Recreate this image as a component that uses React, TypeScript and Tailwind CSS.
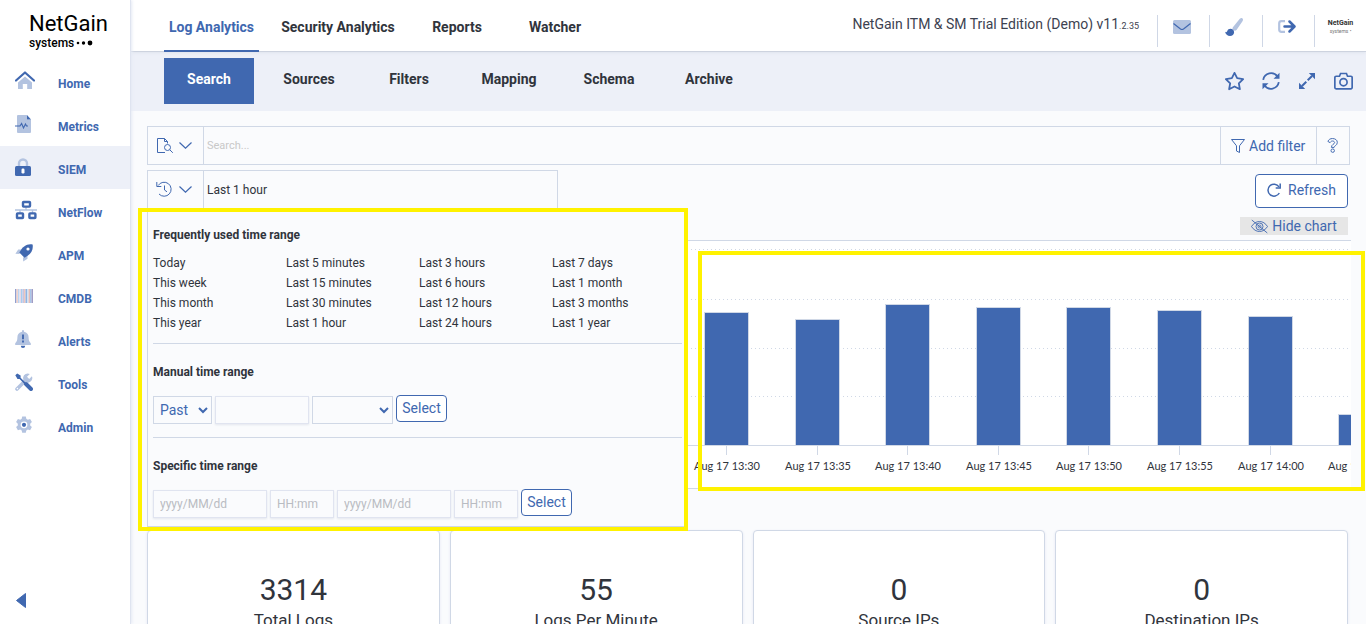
import { useState } from "react";
import type { ReactNode } from "react";

const BLUE = "#4068b0";
const PALE = "#b3c3e0";

const Icon = ({ size = 18, box = "0 0 18 18", children }: { size?: number; box?: string; children: ReactNode }) => (
  <svg width={size} height={size} viewBox={box} fill="none" aria-hidden="true" className="shrink-0">
    {children}
  </svg>
);

const HomeIcon = () => (
  <Icon size={20} box="0 0 20 20">
    <path d="M10 5.500 17 11.500V18h-4.800v-5H7.800v5H3v-6.500z" fill={PALE} />
    <path d="M1 9.500 10 1.500l9 8" stroke={BLUE} strokeWidth="2.200" strokeLinecap="round" strokeLinejoin="round" />
  </Icon>
);

const MetricsIcon = () => (
  <Icon>
    <path d="M3 0h9v4.500h4V17a1 1 0 0 1-1 1H3a1 1 0 0 1-1-1V1a1 1 0 0 1 1-1z" fill={PALE} />
    <path d="M12 0v4.500h4z" fill={BLUE} />
    <path d="M0 11h5l1.600-2.500L8.500 13l2-4 1 2H13" stroke={BLUE} strokeWidth="1.100" />
  </Icon>
);

const LockIcon = () => (
  <Icon>
    <path d="M4 9V5.500a4 4 0 0 1 8 0V9" stroke={PALE} strokeWidth="2.400" />
    <rect x="0" y="8" width="16" height="10" rx="1.500" fill={BLUE} />
    <rect x="6.500" y="10.500" width="3" height="5" rx="1.200" fill="#fff" />
  </Icon>
);

const NetflowIcon = () => (
  <Icon size={22} box="0 0 22 18">
    <path d="M0 9h22M11 6v3M5 9v3M17.500 9v3" stroke={PALE} strokeWidth="1.400" />
    <rect x="8" y="1" width="7" height="4.600" rx="0.600" stroke={BLUE} strokeWidth="2.400" />
    <rect x="2" y="12.400" width="6" height="4.600" rx="0.600" stroke={BLUE} strokeWidth="2.400" />
    <rect x="14.400" y="12.400" width="6" height="4.600" rx="0.600" stroke={BLUE} strokeWidth="2.400" />
  </Icon>
);

const RocketIcon = () => (
  <Icon>
    <path d="M6 5.500H3.200L.4 9.800 4.500 10zM12.500 12v2.800L8.200 17.600 8 13.500z" fill={PALE} />
    <path d="M17.600.5c.9 5-1.200 9.500-8.100 13.200L4.300 8.500C7.500 2.500 12-.6 17.600.5z" fill={BLUE} />
    <circle cx="13" cy="5" r="1.600" fill="#fff" />
  </Icon>
);

const stripes = [
  "#8f9fd0", "#f3d3cb", "#b9d6f3", "#e6d9e6", "#a5cdf0", "#c9c4de",
  "#efc7bd", "#8fb4e2", "#cfe3f6", "#e3bdb8", "#a9c6ea", "#a09cc4",
];

const BarcodeIcon = () => (
  <Icon>
    {stripes.map((color, i) => (
      <rect key={color} x={i * 1.5} y="2" width="1.500" height="14" fill={color} />
    ))}
  </Icon>
);

const BellIcon = () => (
  <Icon>
    <path d="M8 0a1 1 0 0 1 1 1v.8c3 .5 4.600 2.700 4.600 5.500 0 3 .6 4.400 2.200 6V15H.2v-1.700c1.600-1.600 2.200-3 2.200-6C2.400 4.500 4 2.300 7 1.800V1a1 1 0 0 1 1-1z" fill={PALE} />
    <path d="M5.800 15.800h4.400a2.200 2.200 0 0 1-4.400 0z" fill={BLUE} />
    <path d="M8 4.500v4.800M8 10.600v1.800" stroke={BLUE} strokeWidth="1.900" />
  </Icon>
);

const ToolsIcon = () => (
  <Icon>
    <path d="M2 16 11.500 6.500" stroke={PALE} strokeWidth="3.600" strokeLinecap="round" />
    <path d="M16.900 3.200 14.200 6 12 3.800 14.800 1A4.600 4.600 0 1 0 16.900 3.200z" fill={PALE} />
    <circle cx="2.400" cy="15.600" r=".8" fill="#fff" />
    <path d="M.3 2.200 2.200.4 5.600 2.600V4.800l4.800 4.800-1.200 1.200L4.600 6H2.500z" fill={BLUE} />
    <path d="m11 11 5 5" stroke={BLUE} strokeWidth="4" strokeLinecap="round" />
  </Icon>
);

const GearIcon = () => (
  <Icon>
    <path d="M7.200.5h3.600l.5 2.300 1.500.9 2.300-.8 1.800 3.200-1.700 1.600v1.800l1.700 1.600-1.800 3.200-2.300-.8-1.500.9-.5 2.400H7.200l-.5-2.400-1.500-.9-2.300.8-1.800-3.200 1.700-1.600V7.700L1.100 6.100l1.800-3.200 2.300.8 1.500-.9z" fill={PALE} />
    <circle cx="9" cy="8.800" r="3.400" fill="#fff" />
    <circle cx="9" cy="8.800" r="2.100" fill={BLUE} />
  </Icon>
);

const menu = [
  { name: "Home", icon: <HomeIcon /> },
  { name: "Metrics", icon: <MetricsIcon /> },
  { name: "SIEM", icon: <LockIcon /> },
  { name: "NetFlow", icon: <NetflowIcon /> },
  { name: "APM", icon: <RocketIcon /> },
  { name: "CMDB", icon: <BarcodeIcon /> },
  { name: "Alerts", icon: <BellIcon /> },
  { name: "Tools", icon: <ToolsIcon /> },
  { name: "Admin", icon: <GearIcon /> },
];

const Sidebar = () => (
  <aside className="relative z-20 flex w-[131px] shrink-0 flex-col border-r border-[#dfe4f0] bg-white shadow-[1px_0_3px_#e4e9f4]">
    <a href="#home" className="flex h-[60px] flex-col pt-3 pl-[29px] text-black">
      <span className="text-[22px] leading-6">NetGain</span>
      <span className="flex items-center gap-[2px] text-xs leading-[14px] font-medium">
        systems
        <svg width="17" height="6" viewBox="0 0 17 6" aria-hidden="true">
          <circle cx="2" cy="3" r="1.300" />
          <circle cx="7.500" cy="3" r="1.700" />
          <circle cx="14" cy="3" r="2.400" />
        </svg>
      </span>
    </a>
    <nav>
      {menu.map((item) => (
        <a
          key={item.name}
          href={`#${item.name.toLowerCase()}`}
          className={`flex h-[43px] items-center pl-[15px] text-xs font-bold text-[#4068b0] ${item.name === "SIEM" ? "bg-[#edf0f8]" : ""}`}
        >
          <span className="flex w-[43px] pb-px">{item.icon}</span>
          <span className="pt-1">{item.name}</span>
        </a>
      ))}
    </nav>
    <button aria-label="Collapse menu" className="mt-auto mb-4 ml-4 w-[10px]">
      <svg width="10" height="15" viewBox="0 0 10 15" aria-hidden="true">
        <path d="M9.500.5v14L.5 7.500z" fill={BLUE} stroke={BLUE} strokeLinejoin="round" />
      </svg>
    </button>
  </aside>
);

const mainTabs = [
  { name: "Log Analytics", width: "w-[95px]" },
  { name: "Security Analytics", width: "w-[134px]" },
  { name: "Reports", width: "w-20" },
  { name: "Watcher", width: "w-[92px]" },
];

const Header = () => (
  <header className="relative z-10 flex h-[52px] shrink-0 justify-between border-b border-[#cdd3df] bg-white shadow-[0_1px_3px_#dfe4ee]">
    <nav className="flex gap-3 pl-[33px]">
      {mainTabs.map((tab, i) => (
        <a
          key={tab.name}
          href="#tab"
          className={`-mb-px flex items-center justify-center border-b-2 pt-1 text-sm font-bold whitespace-nowrap ${tab.width} ${i === 0 ? "border-[#4068b0] text-[#4068b0]" : "border-transparent text-[#30343c]"}`}
        >
          {tab.name}
        </a>
      ))}
    </nav>
    <div className="flex items-end pb-1">
      <p className="mr-[18px] mb-[11px] text-sm leading-5 whitespace-nowrap text-[#3d4250]">
        NetGain ITM &amp; SM Trial Edition (Demo) v11<span className="text-[9px]">.2.35</span>
      </p>
      <button aria-label="Messages" className="flex h-8 w-[52px] items-center justify-center border-l border-[#cfd7e6] pr-1 pb-2">
        <Icon>
          <rect y="2" width="18" height="14" rx="1.500" fill={PALE} />
          <path d="M.5 5.500 7.500 11q1.500 1 3 0l7-5.500" stroke={BLUE} strokeWidth="1.200" />
        </Icon>
      </button>
      <button aria-label="Theme" className="flex h-8 w-[53px] items-center justify-center border-l border-[#cfd7e6] pr-1 pb-2">
        <Icon>
          <path d="M17.500.5c.8.800.6 1.800 0 2.800l-6 8.700c-.8.800-1.500.9-2.400.6-.9-.5-1.800-1.500-1.600-2.400.1-.5.300-.9.800-1.400L14.800.8c1-.8 2-1 2.700-.3z" fill={PALE} />
          <path d="M5.500 10.800c2 0 3.600 1.500 3.600 3.400C9.100 16.500 7.300 18 5 18c-2.500 0-4.500-1.500-4.900-4.200C1.300 14.500 2 14 2.300 13c.5-1.400 1.600-2.200 3.200-2.200z" fill={BLUE} />
        </Icon>
      </button>
      <button aria-label="Log out" className="flex h-8 w-[52px] items-center justify-center border-l border-[#cfd7e6] pr-1 pb-2">
        <Icon>
          <path d="M7 3.200H3.500A2.300 2.300 0 0 0 1.200 5.500v6a2.300 2.300 0 0 0 2.300 2.300H7" stroke={PALE} strokeWidth="2.200" />
          <path d="M6.500 8.500h9.500M11.500 3.500l5 5-5 5" stroke={BLUE} strokeWidth="2.500" strokeLinejoin="round" strokeLinecap="round" />
        </Icon>
      </button>
      <button aria-label="Account" className="flex h-8 w-[52px] flex-col items-center border-l border-[#cfd7e6] pt-[3px] text-[#333]">
        <span className="text-[7px] leading-[10px] font-bold">NetGain</span>
        <span className="text-[5px] leading-[6px] text-[#777]">systems •</span>
      </button>
    </div>
  </header>
);

const SubNav = () => (
  <div className="flex h-[59px] shrink-0 items-start justify-between bg-[#edf0f8] pt-[6px] pr-[13px] pl-[33px]">
    <nav className="flex gap-[10px]">
      {["Search", "Sources", "Filters", "Mapping", "Schema", "Archive"].map((name, i) => (
        <a
          key={name}
          href="#section"
          className={`flex h-[46px] w-[90px] items-center justify-center pb-1 text-sm font-bold ${i === 0 ? "bg-[#4068b0] text-white" : "text-[#30343c]"}`}
        >
          {name}
        </a>
      ))}
    </nav>
    <div className="flex h-[46px] items-center gap-[18px]">
      <button aria-label="Favourite">
        <Icon size={19}>
          <path d="m9 .8 2.500 5.100 5.700.8-4.100 4 1 5.600L9 13.700l-5.100 2.600 1-5.600-4.100-4 5.700-.8z" stroke={BLUE} strokeWidth="1.700" strokeLinejoin="round" />
        </Icon>
      </button>
      <button aria-label="Reload">
        <Icon>
          <path d="M1.200 7.800A8 8 0 0 1 15.500 4.500M16.800 10.200A8 8 0 0 1 2.500 13.500" stroke={BLUE} strokeWidth="1.800" />
          <path d="M17.500.8V6.800H11.500zM.5 17.200V11.200H6.500z" fill={BLUE} />
        </Icon>
      </button>
      <button aria-label="Expand">
        <Icon>
          <path d="M17 1v6.200L10.800 1zM1 17v-6.200L7.200 17z" fill={BLUE} />
          <path d="m14 4-4.300 4.300M8.300 9.700 4 14" stroke={BLUE} strokeWidth="2" />
        </Icon>
      </button>
      <button aria-label="Snapshot">
        <Icon size={19}>
          <path d="M2 4h3.200l1-2.600h5.600L12.800 4H16a1.200 1.200 0 0 1 1.200 1.200v9.600A1.200 1.200 0 0 1 16 16H2a1.200 1.200 0 0 1-1.200-1.200V5.200A1.200 1.200 0 0 1 2 4z" stroke={BLUE} strokeWidth="1.600" />
          <circle cx="9" cy="9.700" r="3.400" stroke={BLUE} strokeWidth="1.600" />
        </Icon>
      </button>
    </div>
  </div>
);

const Chevron = () => (
  <svg width="13" height="7" viewBox="0 0 13 7" fill="none" aria-hidden="true">
    <path d="m.5.5 6 5.700 6-5.700" stroke={BLUE} strokeWidth="1.200" />
  </svg>
);

const SearchBar = () => (
  <div className="flex h-[39px] border border-[#d0d8e6]">
    <button aria-label="Saved searches" className="flex w-14 shrink-0 items-center gap-[6px] border-r border-[#d0d8e6] pl-[9px]">
      <Icon size={16} box="0 0 16 16">
        <path d="M8 14.500H.5v-14h7l3 3v2M7.500.5v3h3" stroke={BLUE} />
        <circle cx="10.500" cy="9.500" r="3" stroke={BLUE} />
        <path d="m12.800 11.800 3 3" stroke={BLUE} />
      </Icon>
      <Chevron />
    </button>
    <input
      aria-label="Search"
      placeholder="Search..."
      className="min-w-0 flex-1 bg-transparent px-[3px] pt-[2px] text-[11px] outline-none placeholder:text-[#c8c8c8]"
    />
    <button className="flex w-24 items-center gap-1 border-l border-[#d0d8e6] pl-[10px] text-sm whitespace-nowrap text-[#4068b0]">
      <Icon size={14} box="0 0 14 14">
        <path d="M.5.5h13L8.500 6.800v6.700l-3-1.500V6.800z" stroke={BLUE} />
      </Icon>
      Add filter
    </button>
    <button aria-label="Help" className="flex w-[33px] items-center justify-center border-l border-[#d0d8e6] pr-[2px]">
      <svg width="11" height="15" viewBox="0 0 10 14" fill="none" aria-hidden="true">
        <path d="M.7 3.200C1.400 1.400 3 .5 5 .5c2.500 0 4.500 1.400 4.500 3.600 0 3-3 3.100-3 4.700H4c0-3 3-3.100 3-4.500 0-.9-.9-1.500-2-1.500-1 0-1.600.5-2.300 1.500z" stroke={BLUE} strokeWidth=".9" />
        <circle cx="5.200" cy="11.800" r="1.600" stroke={BLUE} strokeWidth=".9" />
      </svg>
    </button>
  </div>
);

const presets = [
  ["Today", "Last 5 minutes", "Last 3 hours", "Last 7 days"],
  ["This week", "Last 15 minutes", "Last 6 hours", "Last 1 month"],
  ["This month", "Last 30 minutes", "Last 12 hours", "Last 3 months"],
  ["This year", "Last 1 hour", "Last 24 hours", "Last 1 year"],
];

const fieldClass = "h-7 border border-[#e0e4f0] bg-[#fafbfd] px-[6px] text-xs shadow-[0_1px_2px_#e4e7ee] outline-none placeholder:text-[#b9bcc2]";
const selectClass = "h-7 border border-[#d0d8e6] bg-[#fafbfd] pl-[2px] text-sm text-[#4068b0] outline-none";
const buttonClass = "h-[27px] w-[51px] rounded border border-[#4068b0] bg-white pb-[2px] text-sm leading-5 text-[#4068b0]";

const TimeRangePopup = ({ onPick }: { onPick: (range: string) => void }) => (
  <div className="absolute top-full left-0 z-10 w-[540px] border border-t-0 border-[#d0d8e6] bg-[#fafbfd] pt-4 pr-1 pb-2 pl-[5px] text-xs leading-5 text-[#30343c]">
    <h2 className="font-bold">Frequently used time range</h2>
    <div className="mt-2 grid grid-cols-[repeat(4,133px)]">
      {presets.flat().map((name) => (
        <button key={name} onClick={() => onPick(name)} className="text-left">
          {name}
        </button>
      ))}
    </div>
    <hr className="mt-[10px] border-[#d0d8e6]" />

    <h2 className="mt-[18px] font-bold">Manual time range</h2>
    <div className="mt-[13px] flex items-start gap-[3px]">
      <select aria-label="Direction" className={`mt-px w-[59px] ${selectClass}`}>
        <option>Past</option>
      </select>
      <input aria-label="Amount" className={`mt-px w-[94px] ${fieldClass}`} />
      <select aria-label="Unit" className={`mt-px w-[81px] ${selectClass}`}>
        <option></option>
      </select>
      <button className={buttonClass}>Select</button>
    </div>
    <hr className="mt-[13px] border-[#d0d8e6]" />

    <h2 className="mt-[18px] font-bold">Specific time range</h2>
    <div className="mt-[13px] flex items-start gap-[3px]">
      <input aria-label="From date" placeholder="yyyy/MM/dd" className={`mt-px w-[114px] ${fieldClass}`} />
      <input aria-label="From time" placeholder="HH:mm" className={`mt-px w-16 ${fieldClass}`} />
      <input aria-label="To date" placeholder="yyyy/MM/dd" className={`mt-px w-[114px] ${fieldClass}`} />
      <input aria-label="To time" placeholder="HH:mm" className={`mt-px w-16 ${fieldClass}`} />
      <button className={buttonClass}>Select</button>
    </div>
    {/* Highlight frame */}
    <div className="pointer-events-none absolute -top-px -right-[2px] -bottom-[5px] -left-[10px] border-4 border-[#fff200]" />
  </div>
);

const bars = [
  { x: 557, height: 133, label: "Aug 17 13:30" },
  { x: 648, height: 126, label: "Aug 17 13:35" },
  { x: 738, height: 141, label: "Aug 17 13:40" },
  { x: 829, height: 138, label: "Aug 17 13:45" },
  { x: 919, height: 138, label: "Aug 17 13:50" },
  { x: 1010, height: 135, label: "Aug 17 13:55" },
  { x: 1101, height: 129, label: "Aug 17 14:00" },
  { x: 1191, height: 31, label: "Aug 17 14:05" },
];

const Chart = () => (
  <div className="relative -mr-px border-y border-[#d0d8e6] bg-white">
    <svg width="100%" height="247" role="img" aria-label="Logs over time">
      {[8, 58, 107, 155].map((y) => (
        <line key={y} x1="0" x2="100%" y1={y + 0.5} y2={y + 0.5} stroke="#d0d8e6" strokeDasharray="1 3" />
      ))}
      {bars.map((bar) => (
        <g key={bar.x}>
          <rect x={bar.x + 0.5} y={204.5 - bar.height} width="44" height={bar.height} fill={BLUE} stroke="#d0d8e6" />
          <line x1={bar.x + 22.5} x2={bar.x + 22.5} y1="205" y2="214" stroke="#d0d8e6" />
          <text x={bar.x + 23} y="229" textAnchor="middle" fill="#30343c" className="font-['Lato',sans-serif] text-[11px]">
            {bar.label}
          </text>
        </g>
      ))}
      <line x1="0" x2="100%" y1="204.500" y2="204.500" stroke="#d0d8e6" />
    </svg>
    {/* Highlight frame */}
    <div className="pointer-events-none absolute top-[10px] -right-[14px] -bottom-[3px] left-[551px] border-4 border-[#fff200]" />
  </div>
);

const stats = [
  { value: "3314", label: "Total Logs" },
  { value: "55", label: "Logs Per Minute" },
  { value: "0", label: "Source IPs" },
  { value: "0", label: "Destination IPs" },
];

export default function App() {
  const [range, setRange] = useState("Last 1 hour");

  return (
    <div className="flex h-screen overflow-hidden bg-[#fafbfd] font-['Roboto',sans-serif] text-[#30343c]">
      <Sidebar />
      <div className="flex min-w-0 flex-1 flex-col">
        <Header />
        <SubNav />
        <main className="min-h-0 flex-1 overflow-hidden px-4 pt-[15px]">
          <SearchBar />
          <div className="mt-[5px] flex justify-between">
            <div className="relative h-[39px] w-[411px]">
              <div className="flex h-full border border-[#d0d8e6]">
                <button aria-label="Time range" className="flex w-14 shrink-0 items-center gap-[6px] border-r border-[#d0d8e6] pl-2">
                  <Icon size={17} box="0 0 17 17">
                    <path d="M2.200 4.500A7 7 0 1 1 3 13M.8 1v4.500h4.500" stroke={BLUE} />
                    <path d="M8.500 4.500V9l2.500 1.800" stroke={BLUE} />
                  </Icon>
                  <Chevron />
                </button>
                <input
                  aria-label="Selected time range"
                  value={range}
                  onChange={(e) => setRange(e.target.value)}
                  className="min-w-0 flex-1 bg-transparent px-[3px] text-xs outline-none"
                />
              </div>
              <TimeRangePopup onPick={setRange} />
            </div>
            <div className="mr-[2px] flex flex-col items-end pt-1 text-sm text-[#4068b0]">
              <button className="flex h-[34px] w-[93px] items-center justify-center gap-[7px] rounded border border-[#4068b0] bg-white pb-[2px]">
                <Icon size={14} box="0 0 14 14">
                  <path d="M12 3.800A6 6 0 1 0 12.300 10" stroke={BLUE} strokeWidth="1.500" />
                  <path d="M13.200.5v4.500H8.700" stroke={BLUE} strokeWidth="1.500" />
                </Icon>
                Refresh
              </button>
              <button className="mt-[9px] flex h-[18px] w-[108px] items-center justify-center gap-1 bg-[#e6e6e6] leading-[18px]">
                <Icon size={17} box="0 0 17 14">
                  <path d="M.5 7C2.500 3.800 5.300 2 8.500 2s6 1.800 8 5c-2 3.200-4.800 5-8 5s-6-1.800-8-5zM.8.5l15.500 13" stroke={BLUE} strokeWidth=".9" />
                  <circle cx="8.500" cy="7" r="3.500" stroke={BLUE} strokeWidth=".9" />
                  <circle cx="8.500" cy="7" r="1.500" stroke={BLUE} strokeWidth=".8" />
                </Icon>
                Hide chart
              </button>
            </div>
          </div>
          <div className="mt-[5px]">
            <Chart />
          </div>
          <div className="mt-[41px] mr-[2px] grid grid-cols-4 gap-[10px]">
            {stats.map((stat) => (
              <div key={stat.label} className="flex h-32 flex-col items-center rounded border border-[#d0d8e6] bg-white pt-[39px] shadow-[0_1px_3px_#e4e9f4]">
                <span className="text-[30px] leading-10">{stat.value}</span>
                <span className="text-[17px] leading-5">{stat.label}</span>
              </div>
            ))}
          </div>
        </main>
      </div>
    </div>
  );
}
